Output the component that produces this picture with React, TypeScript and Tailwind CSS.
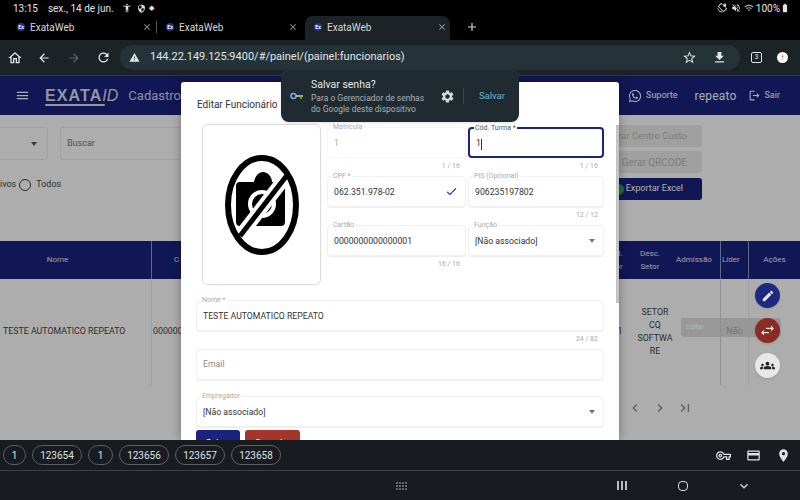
import { MdAccessibilityNew, MdAdd, MdArrowBack, MdArrowForward, MdBatteryFull, MdCheck, MdChevronLeft, MdChevronRight, MdClose, MdSwapHoriz, MdCreditCard, MdEdit, MdFileDownload, MdGroups, MdKeyboardArrowDown, MdLastPage, MdLocationOn, MdMenu, MdOutlineHome, MdOutlineLogout, MdRefresh, MdSettings, MdStarBorder, MdVolumeOff, MdOutlineVpnKey, MdWarning, MdWifi, MdSecurity, MdScreenLockRotation } from "react-icons/md";
import { FaWhatsapp } from "react-icons/fa";

function Tab({ active, divider, w }: { active?: boolean; divider?: boolean; w: string }) {
  return (
    <div className={`flex items-center h-full shrink-0 pb-[2px] ${w} ${active ? "bg-[#1c2327] rounded-t-lg pl-[9px] pr-[3px]" : ""}`}>
      <div className="w-[8px] h-[8px] rounded-full bg-[#27358f] text-white text-[5px] leading-[8px] text-center font-bold shrink-0">Ex</div>
      <span className="ml-[5px] text-[10px] text-[#d5d8da]">ExataWeb</span>
      <MdClose className={`ml-auto text-[#9aa0a6] ${divider ? "mr-[4px]" : ""}`} size={10} />
      {divider && <div className="w-px h-[12px] bg-[#55595c]" />}
    </div>
  );
}

function Field({ label, value, hint, focused, disabled, select, check, w, muted }: { label?: string; value: string; hint?: string; focused?: boolean; disabled?: boolean; select?: boolean; check?: boolean; w: string; muted?: boolean }) {
  return (
    <div className={`${w} shrink-0`}>
      <div className={`relative h-[31px] rounded-[4px] flex items-center px-[6px] ${focused ? "border-2 border-[#1a237e]" : disabled ? "border border-[#f6f6f6]" : "border border-[#f0f0f0] shadow-[0_1px_1px_rgba(0,0,0,0.07)]"}`}>
        {label && <span className={`absolute left-[4px] top-[-5px] bg-white px-[1px] text-[7px] leading-[9px] ${focused ? "text-[#555]" : "text-[#aaa]"}`}>{label}</span>}
        <span className={`text-[8.7px] ${label ? "pt-[3px]" : ""} ${disabled ? "text-[#aaa]" : muted ? "text-[#888]" : "text-[#333]"}`}>{value}</span>
        {focused && <span className="w-px h-[11px] bg-[#333] mt-[3px]" />}
        {check && <MdCheck className="ml-auto text-[#1a237e] mr-[1px]" size={13} />}
        {select && <span className="ml-auto mr-[2px] border-x-[3.5px] border-t-[4px] border-x-transparent border-t-[#777]" />}
      </div>
      <div className="h-[18px] pt-[4px] pr-[6px] text-right text-[7px] leading-[9px] text-[#aaa]">{hint}</div>
    </div>
  );
}

function NoPhoto() {
  return (
    <svg width="80" height="106" viewBox="0 0 80 106">
      <path d="M14 34a4 4 0 0 1 4-4h14c1-6 5-10 9-10s9 4 9 10h9a4 4 0 0 1 4 4v36a4 4 0 0 1-4 4H18a4 4 0 0 1-4-4z" fill="#000" />
      <circle cx="40" cy="52" r="12" fill="none" stroke="#fff" strokeWidth="4" />
      <path d="M66 22 18 84" stroke="#fff" strokeWidth="13" />
      <path d="M66 22 18 84" stroke="#000" strokeWidth="5" />
      <ellipse cx="40" cy="53" rx="34" ry="47" fill="none" stroke="#000" strokeWidth="6" />
    </svg>
  );
}

export default function App() {
  return (
    <div className="relative w-[800px] h-[500px] overflow-hidden flex flex-col bg-black font-['Roboto',sans-serif]">
      {/* status bar */}
      <div className="h-[16px] shrink-0 flex items-center pl-[13px] pr-[10px] text-[10px] text-[#e4e4e4]">
        <span>13:15</span>
        <span className="ml-[10px]">sex., 14 de jun.</span>
        <MdAccessibilityNew className="ml-[8px]" size={10} />
        <MdSecurity className="ml-[5px]" size={9} />
        <span className="ml-[3px] text-[7px]">◆</span>
        <MdScreenLockRotation className="ml-auto" size={10} />
        <MdVolumeOff className="ml-[4px]" size={10} />
        <MdWifi className="ml-[3px] text-[#aaa]" size={10} />
        <span className="ml-[2px]">100%</span>
        <MdBatteryFull className="ml-[0px]" size={10} />
      </div>
      {/* tabs */}
      <div className="h-[24px] shrink-0 flex items-center pl-[17px]">
        <Tab divider w="w-[140px]" />
        <div className="w-[9px]" />
        <Tab w="w-[132px]" />
        <div className="w-[7px]" />
        <Tab active w="w-[145px]" />
        <MdAdd className="ml-[15px] mb-[2px] text-[#d5d8da]" size={14} />
      </div>
      {/* toolbar */}
      <div className="h-[35px] shrink-0 bg-[#1c2327] flex items-center text-[#e3e5e6] pl-[7px] pr-[9px]">
        <MdOutlineHome size={16} />
        <MdArrowBack className="ml-[14px]" size={14} />
        <MdArrowForward className="ml-[16px] text-[#5f6468]" size={14} />
        <MdRefresh className="ml-[15px]" size={15} />
        <div className="ml-[9px] w-[620px] h-[25px] rounded-full bg-[#243338] flex items-center pl-[9px] pr-[13px]">
          <MdWarning size={11} />
          <span className="ml-[10px] text-[11px]">144.22.149.125:9400/#/painel/(painel:funcionarios)</span>
          <MdStarBorder className="ml-auto" size={15} />
          <MdFileDownload className="ml-[15px]" size={15} />
        </div>
        <div className="ml-[11px] w-[11px] h-[11px] border border-[#e3e5e6] rounded-[2px] text-[7px] leading-[9px] text-center">3</div>
        <div className="ml-[15px] w-[11px] h-[11px] rounded-full bg-white flex items-center justify-center text-[#d93025] text-[8px] leading-none font-bold">↑</div>
      </div>
      {/* page */}
      <div className="relative h-[365px] shrink-0 overflow-hidden bg-white">
        <div className="h-[40px] bg-[#1a237e] border-t border-[#3d4aa0] flex items-center text-white">
          <MdMenu className="ml-[15px]" size={15} />
          <div className="ml-[15px] relative font-['Liberation_Sans',sans-serif] leading-none text-[#d9dcec]">
            <span className="text-[16px] font-bold tracking-[1.1px]">EXATA</span>
            <span className="text-[16px] italic">ID</span>
            <span className="absolute left-0 bottom-[-2px] w-[60px] h-[2px] bg-[#d9dcec] rounded-full" />
          </div>
          <span className="ml-[10px] text-[13px] text-[#cfd3ea]">Cadastro</span>
          <FaWhatsapp className="ml-auto" size={14} />
          <span className="ml-[4px] text-[9px]">Suporte</span>
          <span className="ml-[17px] text-[12px] tracking-[0.2px]">repeato</span>
          <MdOutlineLogout className="ml-[11px]" size={13} />
          <span className="ml-[4px] mr-[20px] text-[9px]">Sair</span>
        </div>
        <div className="h-[126px] flex">
          <div className="w-[240px] shrink-0">
            <div className="flex mt-[12px] gap-[12px]">
              <div className="w-[48px] h-[33px] border border-l-0 border-[#eee] rounded-r-[3px] flex items-center justify-end pr-[10px]">
                <span className="border-x-[3px] border-t-[4px] border-x-transparent border-t-[#555]" />
              </div>
              <div className="flex-1 h-[33px] border border-[#eee] rounded-[3px] flex items-center pl-[6px] pt-[1px] text-[9px] text-[#777]">Buscar</div>
            </div>
            <div className="mt-[18px] flex items-center text-[9px] text-[#444]">
              <span>ivos</span>
              <span className="ml-[3px] w-[12px] h-[12px] rounded-full border border-[#444]" />
              <span className="ml-[5px]">Todos</span>
            </div>
          </div>
          <div className="ml-[360px] w-[102px] mt-[10px] flex flex-col gap-[4px] text-[9px]">
            <div className="h-[22px] rounded-[3px] bg-[#ececec] text-[#bbb] flex items-center justify-end pr-[15px] text-[9.5px]">Gerar Centro Custo</div>
            <div className="h-[22px] rounded-[3px] bg-[#ececec] text-[#bbb] flex items-center justify-end pr-[15px] text-[10px]">≡ Gerar QRCODE</div>
            <div className="h-[22px] mt-[1px] rounded-[3px] bg-[#1a237e] text-white flex items-center justify-end pr-[19px] gap-[2px]">
              <span className="w-[11px] h-[11px] rounded-full bg-[#2e9e5b]" />
              <span>Exportar Excel</span>
            </div>
          </div>
        </div>
        <div className="h-[38px] bg-[#1a237e] text-[#e4e6f3] flex items-stretch text-[8px] text-center">
          <div className="w-[152px] pr-[36px] flex items-center justify-center border-r border-[#8f95c8]">Nome</div>
          <div className="flex-1 pl-[22px] flex items-center">C</div>
          <div className="w-[22px] flex items-center justify-center leading-[13px]">d.<br />or</div>
          <div className="w-[40px] flex items-center justify-center leading-[13px]">Desc.<br />Setor</div>
          <div className="w-[51px] flex items-center pl-[6px] border-r border-[#8f95c8]">Admissão</div>
          <div className="w-[28px] flex items-center pl-[1px] border-r border-[#8f95c8]">Líder</div>
          <div className="w-[51px] flex items-center justify-center">Ações</div>
        </div>
        <div className="h-[106px] flex items-stretch text-[8.8px] text-[#444] text-center">
          <div className="w-[152px] flex items-center pl-[3px] border-r border-[#e8e8e8]">TESTE AUTOMATICO REPEATO</div>
          <div className="flex-1 flex items-center pl-[1px]">000000</div>
          <div className="w-[22px] flex items-center justify-center pl-[2px]">1</div>
          <div className="w-[50px] flex items-center justify-center leading-[13px]">SETOR<br />CQ<br />SOFTWA<br />RE</div>
          <div className="w-[41px] border-r border-[#d8d8d8]" />
          <div className="w-[28px] flex items-center justify-center border-r border-[#eee]">Não</div>
          <div className="w-[51px]" />
        </div>
        <div className="flex justify-end items-center pr-[107px] gap-[9px] mt-[15px] text-[#888]">
          <MdChevronLeft size={16} />
          <MdChevronRight size={16} />
          <MdLastPage size={16} />
        </div>

        {/* backdrop */}
        <div className="absolute inset-0 bg-black/32" />

        {/* row actions */}
        <div className="absolute left-[681px] top-[243px] w-[100px] h-[19px] rounded-[3px] bg-[#8f8f8f]/70 text-[7px] leading-[19px] pl-[5px] text-[#b5b5b5]">Editar</div>
        <div className="absolute left-[755px] top-[208px] w-[25px] flex flex-col gap-[10px]">
          <div className="h-[25px] rounded-full bg-[#1b2a80] text-[#e8e8e8] flex items-center justify-center shadow"><MdEdit size={14} /></div>
          <div className="h-[25px] rounded-full bg-[#8a2c24] text-[#e8e8e8] flex items-center justify-center shadow"><MdSwapHoriz size={17} /></div>
          <div className="h-[25px] rounded-full bg-[#e8e8e8] text-[#222] flex items-center justify-center shadow"><MdGroups size={15} /></div>
        </div>

        {/* modal */}
        <div className="absolute left-[181px] top-[7px] bottom-0 w-[438px] bg-white rounded-t-[3px] overflow-hidden shadow-[0_0_10px_rgba(0,0,0,0.35)]">
          <div className="absolute right-0 top-[43px] w-[3px] h-[178px] bg-[#c4c4c4]" />
          <div className="h-[348px] overflow-hidden pl-[15px] pr-[15px]">
            <div className="h-[42px] pt-[16px] pl-[1px] text-[10px] leading-[14px] text-[#333]">Editar Funcionário</div>
            <div className="flex">
              <div className="ml-[6px] w-[119px] h-[161px] shrink-0 border border-[#ddd] rounded-[6px] shadow-[0_0_2px_rgba(0,0,0,0.1)] flex items-center justify-center">
                <NoPhoto />
              </div>
              <div className="ml-[6px] flex-1 pt-[3px]">
                <div className="flex gap-[2px]">
                  <Field w="w-[139px]" label="Matrícula" value="1" hint="1 / 16" disabled />
                  <Field w="w-[136px]" label="Cód. Turma *" value="1" hint="1 / 16" focused />
                </div>
                <div className="flex gap-[2px]">
                  <Field w="w-[139px]" label="CPF *" value="062.351.978-02" check />
                  <Field w="w-[136px]" label="PIS (Opcional)" value="906235197802" hint="12 / 12" />
                </div>
                <div className="flex gap-[2px]">
                  <Field w="w-[139px]" label="Cartão" value="0000000000000001" hint="16 / 16" />
                  <Field w="w-[136px]" label="Função" value="[Não associado]" select />
                </div>
              </div>
            </div>
            <div className="mt-[15px]">
              <Field w="w-full" label="Nome *" value="TESTE AUTOMATICO REPEATO" hint="24 / 82" />
              <Field w="w-full" value="Email" muted />
              <div className="mt-[-2px]">
                <Field w="w-full" label="Empregador" value="[Não associado]" select />
              </div>
            </div>
          </div>
          <div className="flex gap-[5px] pl-[15px] text-[9px] text-white text-center">
            <div className="w-[44px] h-[26px] rounded-[3px] bg-[#1a237e] leading-[26px]">Salvar</div>
            <div className="w-[55px] h-[26px] rounded-[3px] bg-[#a5342a] leading-[26px]">Cancelar</div>
          </div>
        </div>
      </div>
      {/* keyboard suggestion bar */}
      <div className="h-[31px] shrink-0 bg-[#181c20] border-b border-[#3d4145] flex items-center pl-[3px] pr-[9px] gap-[6px] text-[10px] text-[#dfe1e3]">
        {["1", "123654", "1", "123656", "123657", "123658"].map((c, i) => (
          <div key={i} className={`h-[20px] rounded-full border border-[#5a6065] flex items-center justify-center ${i === 0 ? "w-[23px]" : c === "1" ? "w-[25px]" : "w-[50px]"}`}>{c}</div>
        ))}
        <MdOutlineVpnKey className="ml-auto" size={15} />
        <MdCreditCard className="ml-[9px]" size={15} />
        <MdLocationOn className="ml-[9px]" size={15} />
      </div>
      {/* navigation bar */}
      <div className="h-[29px] shrink-0 bg-[#181c20] flex items-center text-[#d5d8da]">
        <div className="ml-[396px] grid grid-cols-4 gap-[1px]">
          {Array.from({ length: 12 }).map((_, i) => (
            <span key={i} className="w-[2px] h-[2px] bg-[#666]" />
          ))}
        </div>
        <div className="ml-[210px] flex gap-[2px]">
          <span className="w-[2px] h-[9px] bg-[#bbb]" />
          <span className="w-[2px] h-[9px] bg-[#bbb]" />
          <span className="w-[2px] h-[9px] bg-[#bbb]" />
        </div>
        <div className="ml-[51px] w-[10px] h-[10px] rounded-[4px] border border-[#ddd]" />
        <MdKeyboardArrowDown className="ml-[48px]" size={16} />
      </div>

      {/* save password bubble */}
      <div className="absolute left-[281px] top-[70px] w-[238px] h-[52px] bg-[#1f2b30] rounded-b-lg rounded-t-[5px] flex items-center pl-[9px] pr-[14px] shadow">
        <svg width="14" height="8" viewBox="0 0 14 8" className="shrink-0">
          <circle cx="3.5" cy="4" r="2.5" fill="none" stroke="#6ea8ff" strokeWidth="1.6" />
          <path d="M6 4h7" stroke="#f6c445" strokeWidth="1.6" />
          <path d="M11 4v3" stroke="#55b96e" strokeWidth="1.6" />
        </svg>
        <div className="ml-[7px] w-[130px]">
          <div className="text-[10.5px] leading-[14px] text-[#e4e7e9]">Salvar senha?</div>
          <div className="mt-[1px] text-[8.5px] leading-[10.5px] text-[#a9b1b5] whitespace-nowrap">Para o Gerenciador de senhas<br />do Google deste dispositivo</div>
        </div>
        <MdSettings className="text-[#d5d8da] ml-[-1px]" size={15} />
        <div className="ml-[8px] w-px h-[16px] bg-[#3a464b]" />
        <span className="ml-auto text-[9.5px] text-[#6db3d6]">Salvar</span>
      </div>
    </div>
  );
}
